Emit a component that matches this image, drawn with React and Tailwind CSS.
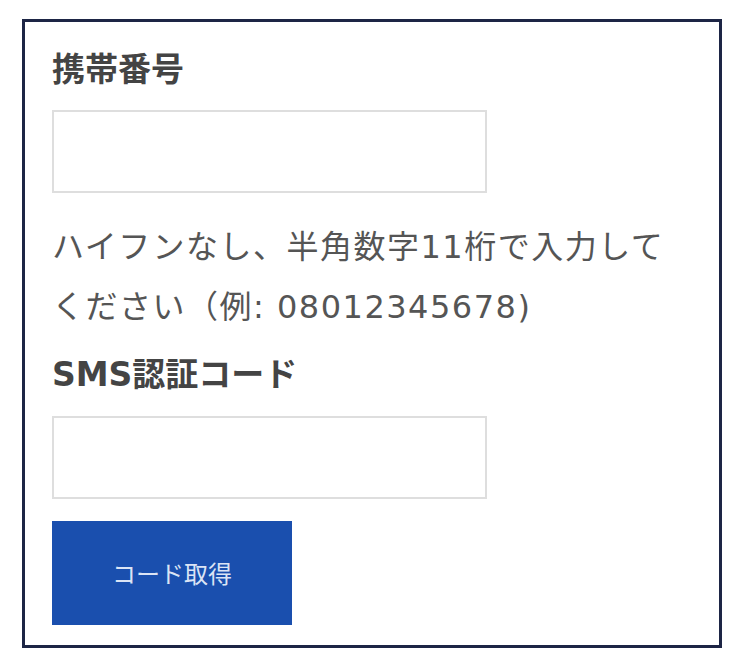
import React from "react";

const FONT = { fontFamily: '"Noto Sans CJK JP", "Noto Sans", sans-serif' };
// latin glyphs in the reference are wide, so let DejaVu take them and CJK fall through
const MIXED = { fontFamily: '"DejaVu Sans", "Noto Sans CJK JP", sans-serif' };

const Field = () => (
  <div className="w-[435px] h-[83px] border-2 border-[#dedede] bg-white" />
);

export default function App() {
  return (
    <div className="w-full h-[672px] bg-white pt-[19px] pl-[22px]" style={FONT}>
      <div className="w-[700px] h-[629px] border-[3px] border-[#1d2545] px-[27px] pt-[25px]">
        <div className="text-[33px] leading-[40px] font-bold text-[#444444]">携帯番号</div>
        <div className="mt-[23px]">
          <Field />
        </div>
        <p className="mt-[24px] text-[32px] leading-[60px] tracking-[1.5px] text-[#555555]" style={MIXED}>
          ハイフンなし、半角数字11桁で入力して
          <br />
          ください（例: 08012345678)
        </p>
        <div className="mt-[18px] text-[33px] leading-[40px] font-bold text-[#444444]" style={MIXED}>
          SMS認証コード
        </div>
        <div className="mt-[21px]">
          <Field />
        </div>
        <button className="mt-[22px] w-[240px] h-[104px] bg-[#1a4fae] text-[#dbe4f5] text-[24px] flex items-center justify-center">
          コード取得
        </button>
      </div>
    </div>
  );
}
